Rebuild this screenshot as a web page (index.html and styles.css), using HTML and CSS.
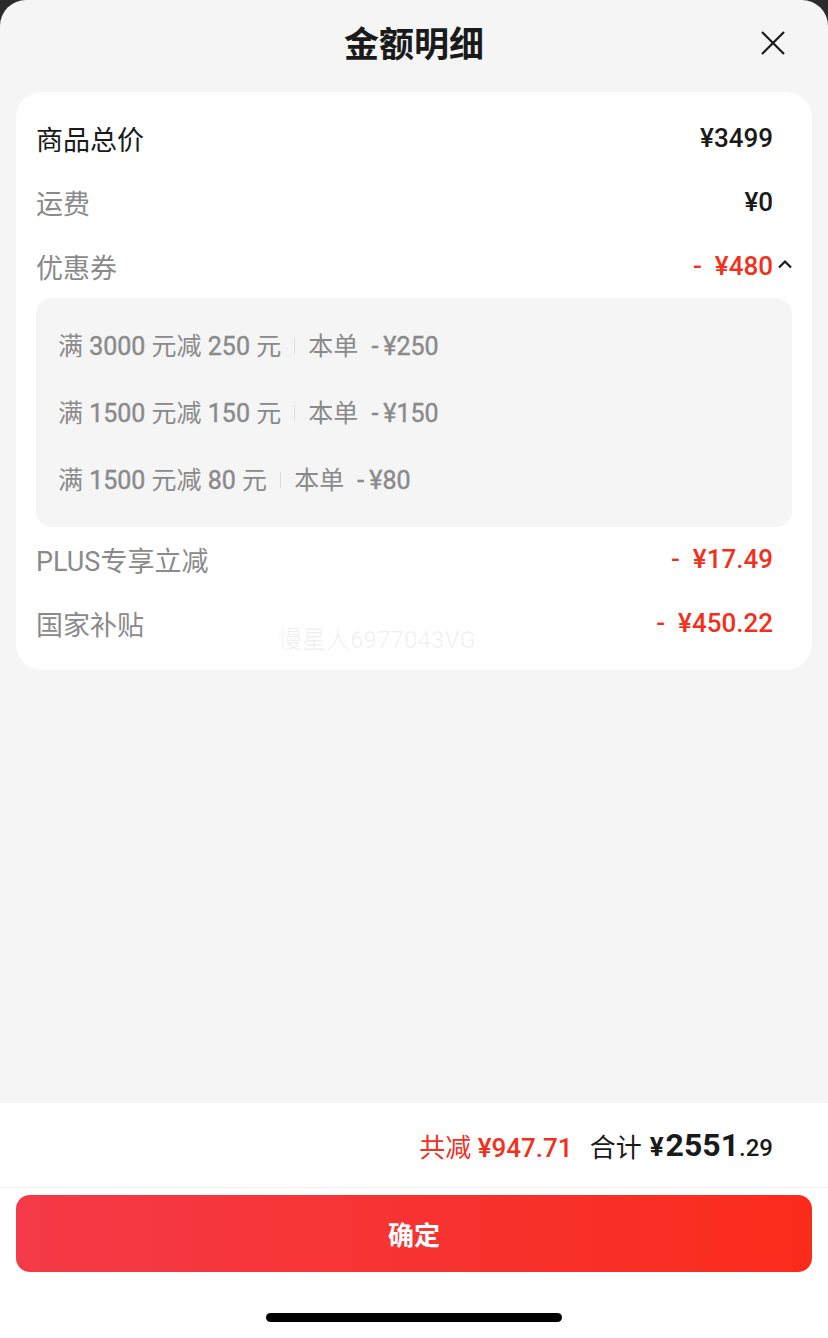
FILE: index.html
```html
<!DOCTYPE html>
<html lang="zh-CN">
<head>
  <meta charset="UTF-8">
  <meta name="viewport" content="width=device-width, initial-scale=1.0">
  <title>金额明细</title>
  <link rel="stylesheet" href="styles.css">
</head>
<body>
  <div class="sheet">
    <div class="sheet-header">
      <h1>金额明细</h1>
      <button class="close-btn" aria-label="关闭">
        <svg width="26" height="26" viewBox="0 0 26 26">
          <path d="M2 2 L24 24 M24 2 L2 24" stroke="#1a1a1a" stroke-width="2.2" fill="none"/>
        </svg>
      </button>
    </div>

    <div class="card">
      <div class="row">
        <span class="label label-dark">商品总价</span>
        <span class="value">¥3499</span>
      </div>
      <div class="row">
        <span class="label">运费</span>
        <span class="value">¥0</span>
      </div>
      <div class="row">
        <span class="label">优惠券</span>
        <span class="value value-red"><span class="minus">-</span>¥480<svg class="caret" width="16" height="10" viewBox="0 0 16 10"><path d="M2 8.5 L8 2.5 L14 8.5" stroke="#1a1a1a" stroke-width="2.2" fill="none"/></svg></span>
      </div>

      <div class="coupon-box">
        <div class="coupon-line">满 <b>3000</b> 元减 <b>250</b> 元<i class="divider"></i>本单 <b class="off">-</b><b>¥250</b></div>
        <div class="coupon-line">满 <b>1500</b> 元减 <b>150</b> 元<i class="divider"></i>本单 <b class="off">-</b><b>¥150</b></div>
        <div class="coupon-line">满 <b>1500</b> 元减 <b>80</b> 元<i class="divider"></i>本单 <b class="off">-</b><b>¥80</b></div>
      </div>

      <div class="row">
        <span class="label">PLUS专享立减</span>
        <span class="value value-red"><span class="minus">-</span>¥17.49</span>
      </div>
      <div class="row">
        <span class="label">国家补贴</span>
        <span class="value value-red"><span class="minus">-</span>¥450.22</span>
      </div>

      <div class="watermark">慢星人6977043VG</div>
    </div>
  </div>

  <div class="footer">
    <div class="summary">
      <span class="saved">共减 <b>¥947.71</b></span>
      <span class="total-label">合计</span>
      <span class="total"><span class="yen">¥</span>2551<span class="cents">.29</span></span>
    </div>
    <div class="btn-wrap">
      <button class="confirm-btn">确定</button>
    </div>
    <div class="home-bar"></div>
  </div>
</body>
</html>
```

FILE: styles.css
```css
* {
  box-sizing: border-box;
}

body {
  width: 828px;
  height: 1338px;
  margin: 0;
  background-color: #2b2b2b;
  color: #1a1a1a;
  font-family: Roboto, "Noto Sans CJK SC", sans-serif;
  display: flex;
  flex-direction: column;
  overflow: hidden;
}

.sheet {
  flex: 1;
  background-color: #f5f5f5;
  border-radius: 26px 26px 0 0;
  padding: 0 16px;
}

.sheet-header {
  height: 92px;
  display: flex;
  align-items: center;
  justify-content: center;
  position: relative;
}

.sheet-header h1 {
  margin: 0;
  font-size: 35px;
  font-weight: 700;
  padding-bottom: 10px;
}

.close-btn {
  position: absolute;
  right: 26px;
  top: 30px;
  width: 26px;
  height: 26px;
  padding: 0;
  border: none;
  background: none;
}

.card {
  position: relative;
  background-color: #fff;
  border-radius: 26px;
  padding: 14px 20px 15px;
}

.row {
  height: 64px;
  display: flex;
  align-items: center;
  justify-content: space-between;
  padding-right: 19px;
  font-size: 27px;
}

.label {
  color: #8a8a8a;
}

.label-dark {
  color: #1a1a1a;
}

.value {
  font-size: 26px;
  font-weight: 500;
  color: #1a1a1a;
  display: flex;
  align-items: center;
}

.value-red {
  color: #f2301c;
}

.minus {
  margin-right: 13px;
}

.caret {
  margin-right: -20px;
  margin-left: 4px;
  margin-top: -4px;
}

.coupon-box {
  background-color: #f5f5f5;
  border-radius: 16px;
  padding: 15px 22px 13px;
}

.coupon-line {
  height: 67px;
  line-height: 67px;
  font-size: 25px;
  color: #8a8a8a;
  white-space: pre;
}

.coupon-line b {
  font-weight: 400;
  -webkit-text-stroke: 0.4px currentColor;
}

.coupon-line .off {
  margin-left: 7px;
  margin-right: 5px;
}

.divider {
  display: inline-block;
  vertical-align: middle;
  width: 1px;
  height: 16px;
  background-color: #dcdcdc;
  margin: 0 13px 4px 13px;
}

.watermark {
  position: absolute;
  left: 262px;
  top: 528px;
  font-size: 24px;
  color: rgba(0, 0, 0, 0.06);
  pointer-events: none;
}

.footer {
  height: 235px;
  background-color: #fff;
  display: flex;
  flex-direction: column;
}

.summary {
  height: 85px;
  display: flex;
  align-items: center;
  justify-content: flex-end;
  padding-right: 55px;
  border-bottom: 1px solid #f0f0f0;
  font-size: 26px;
}

.saved {
  color: #f2301c;
  margin-right: 17px;
}

.saved b {
  font-weight: 500;
}

.total-label {
  margin-right: 8px;
}

.total {
  font-weight: 700;
  font-size: 32px;
}

.total .yen {
  font-size: 26px;
  margin-right: 2px;
}

.total .cents {
  font-size: 24px;
  font-weight: 500;
}

.btn-wrap {
  padding: 7px 16px 0;
}

.confirm-btn {
  width: 100%;
  height: 77px;
  border: none;
  border-radius: 14px;
  background: linear-gradient(90deg, #f43a48, #fb2b1b);
  color: #fff;
  font-family: inherit;
  font-size: 26px;
  font-weight: 700;
}

.home-bar {
  width: 296px;
  height: 9px;
  border-radius: 5px;
  background-color: #000;
  margin: 41px auto 0;
}
```
